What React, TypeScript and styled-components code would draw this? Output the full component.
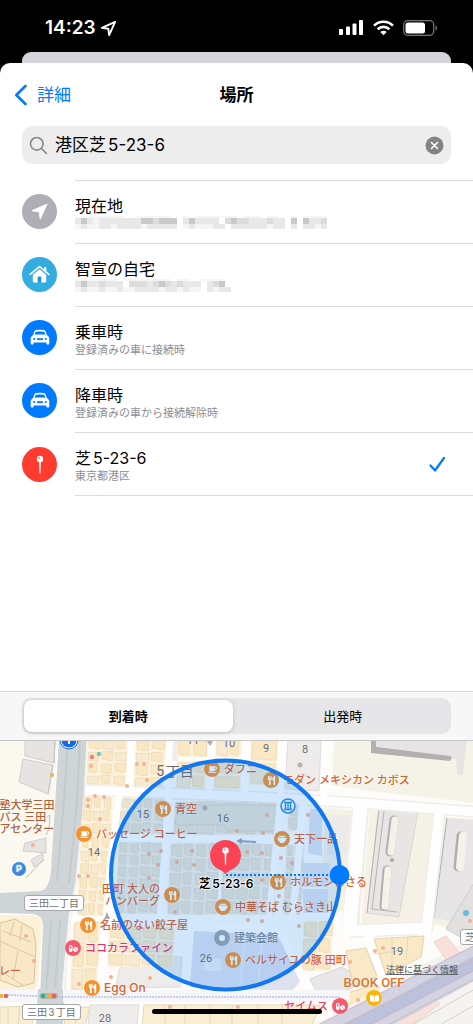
import React, { useState } from "react";
import styled, { createGlobalStyle, css } from "styled-components";
import { FaUtensils, FaCoffee, FaBookOpen, FaPills } from "react-icons/fa";

const blue = "#007aff";

const GlobalStyle = createGlobalStyle`
  * { box-sizing: border-box; }
  body {
    margin: 0;
    background: #000;
    font-family: Inter, "Noto Sans CJK JP", sans-serif;
    color: #000;
    text-autospace: normal;
  }
  button, input { font: inherit; color: inherit; text-autospace: inherit; }
  button { border: 0; padding: 0; background: none; cursor: pointer; }
  svg { display: block; flex: none; }
`;

const Screen = styled.div`
  min-height: 100vh;
  display: flex;
  flex-direction: column;
  position: relative;
  background: #000;
`;

const StatusBar = styled.header`
  height: 52px;
  padding: 4px 35px 0 45px;
  display: flex;
  align-items: center;
  justify-content: space-between;
  color: #fff;
`;

const StatusGroup = styled.div<{ $gap: number }>`
  display: flex;
  align-items: center;
  gap: ${(p) => p.$gap}px;
`;

const Clock = styled.time`
  font-size: 19px;
  line-height: 24px;
  font-weight: 600;
`;

const SheetBehind = styled.div`
  height: 11px;
  margin: 0 22px;
  border-radius: 9px 9px 0 0;
  background: #d5d4da;
`;

const Sheet = styled.main`
  flex: 1;
  display: flex;
  flex-direction: column;
  background: #fff;
  border-radius: 10px 10px 0 0;
  overflow: hidden;
`;

const NavBar = styled.nav`
  height: 63px;
  padding: 0 14px;
  display: grid;
  grid-template-columns: 1fr auto 1fr;
  align-items: center;
`;

const BackButton = styled.button`
  display: flex;
  align-items: center;
  gap: 9px;
  justify-self: start;
  color: ${blue};
  font-size: 17px;
  line-height: 24px;
`;

const Title = styled.h1`
  margin: 0;
  font-size: 17px;
  line-height: 24px;
  font-weight: 700;
`;

const SearchField = styled.label`
  height: 38px;
  margin: 0 22px;
  padding: 0 7px;
  display: flex;
  align-items: center;
  gap: 7px;
  border-radius: 10px;
  background: #ededed;
`;

const SearchInput = styled.input`
  flex: 1;
  min-width: 0;
  padding: 0;
  border: 0;
  outline: 0;
  background: none;
  font-size: 17px;
  line-height: 24px;
`;

const PlaceList = styled.ul`
  list-style: none;
  margin: 16px 0 0;
  padding: 0;
  flex: 1;
`;

const PlaceRow = styled.button`
  width: 100%;
  padding-left: 22px;
  display: flex;
  align-items: center;
  gap: 18px;
  text-align: left;
`;

const RowIcon = styled.span<{ $color: string }>`
  width: 35px;
  height: 35px;
  border-radius: 50%;
  flex: none;
  display: grid;
  place-items: center;
  background: ${(p) => p.$color};
`;

const RowBody = styled.span<{ $last: boolean }>`
  flex: 1;
  height: ${(p) => (p.$last ? 64 : 63)}px;
  padding-right: 27px;
  display: flex;
  align-items: center;
  justify-content: space-between;
  border-top: 1px solid #dcdcde;
  ${(p) => p.$last && css`border-bottom: 1px solid #dcdcde;`}
`;

const RowText = styled.span`
  padding-top: 3px;
  display: flex;
  flex-direction: column;
`;

const RowTitle = styled.span`
  font-size: 16px;
  line-height: 20px;
`;

const RowDetail = styled.span`
  height: 16px;
  font-size: 11px;
  line-height: 16px;
  color: #8e8e93;
`;

const SegmentBar = styled.div`
  padding: 6px 22px;
  border-top: 1px solid #d8d8da;
  border-bottom: 1px solid #c6c6c8;
  background: #f7f7f7;
`;

const Segments = styled.div`
  height: 36px;
  padding: 2px;
  display: grid;
  grid-template-columns: 1fr 1fr;
  border-radius: 9px;
  background: #e6e6e8;
`;

const Segment = styled.button<{ $active: boolean }>`
  border-radius: 8px;
  font-size: 13px;
  line-height: 20px;
  ${(p) =>
    p.$active &&
    css`
      background: #fff;
      font-weight: 700;
      margin-right: 4px;
      box-shadow: 0 1px 4px rgba(0, 0, 0, 0.18);
    `}
`;

const MapArea = styled.section`
  height: 283px;
  display: flex;
  justify-content: center;
  overflow: hidden;
  background: #f7f4ea;
`;

const MapCanvas = styled.div`
  position: relative;
  flex: 0 0 473px;
  height: 100%;
`;

const MapLayer = styled.svg`
  position: absolute;
  inset: 0;
`;

const Poi = styled.div<{ $x: number; $y: number; $color: string; $before?: boolean; $size?: number }>`
  position: absolute;
  top: ${(p) => p.$y}px;
  ${(p) => (p.$before ? css`right: ${473 - p.$x - 8}px;` : css`left: ${p.$x - 8}px;`)}
  transform: translateY(-50%);
  display: flex;
  flex-direction: ${(p) => (p.$before ? "row-reverse" : "row")};
  align-items: center;
  gap: 4px;
  color: ${(p) => p.$color};
  font-size: ${(p) => p.$size ?? 11}px;
  line-height: 12px;
  font-weight: 500;
  text-align: ${(p) => (p.$before ? "right" : "left")};
  white-space: pre;
  text-shadow: 0 0 2px #fff, 0 0 1px #fff;
`;

const PoiBadge = styled.span<{ $color: string }>`
  width: 16px;
  height: 16px;
  flex: none;
  border-radius: 50%;
  display: grid;
  place-items: center;
  background: ${(p) => p.$color};
  color: #fff;
  box-shadow: 0 0 1px #fff;
`;

const MapText = styled.span<{ $x: number; $y: number; $size?: number; $color?: string; $weight?: number }>`
  position: absolute;
  left: ${(p) => p.$x}px;
  top: ${(p) => p.$y}px;
  transform: translate(-50%, -50%);
  white-space: pre;
  font-family: Roboto, "Noto Sans CJK JP", sans-serif;
  font-size: ${(p) => p.$size ?? 11}px;
  line-height: 12px;
  font-weight: ${(p) => p.$weight ?? 400};
  color: ${(p) => p.$color ?? "#66696d"};
  text-shadow: 0 0 2px rgba(255, 255, 255, 0.8);
`;

const StreetSign = styled.span<{ $x: number; $y: number }>`
  position: absolute;
  left: ${(p) => p.$x}px;
  top: ${(p) => p.$y}px;
  padding: 0 4px;
  border: 1px solid #a3a7aa;
  border-radius: 3px;
  background: #fff;
  font-size: 10px;
  line-height: 14px;
  color: #6f7377;
  white-space: nowrap;
`;

const SelectedLabel = styled.span`
  position: absolute;
  left: 226px;
  top: 143px;
  transform: translate(-50%, -50%);
  font-size: 12px;
  line-height: 16px;
  font-weight: 600;
  white-space: nowrap;
  text-shadow: 0 0 2px #fff, 0 0 2px #fff, 0 0 2px #fff, 1px 0 1px #fff, -1px 0 1px #fff;
`;

const LegalLink = styled.a`
  position: absolute;
  right: 15px;
  top: 222px;
  font-size: 9px;
  line-height: 14px;
  font-weight: 500;
  color: #66686b;
  text-decoration: underline;
`;

const HomeIndicator = styled.div`
  position: absolute;
  left: 50%;
  bottom: 10px;
  width: 170px;
  height: 5px;
  margin-left: -85px;
  border-radius: 3px;
  background: #000;
`;

const Arrow = ({ size, filled }: { size: number; filled?: boolean }) => (
  <svg width={size} height={size} viewBox="0 0 18 18" fill={filled ? "#fff" : "none"} stroke="#fff" strokeWidth={filled ? 1 : 2} strokeLinejoin="round">
    <path d="M16 2 L2 8.3 L8.8 9.2 L9.7 16 Z" />
  </svg>
);

const HomeIcon = () => (
  <svg width="21" height="19" viewBox="0 0 21 19" fill="none">
    <path d="M1.2 9.4 L10.5 1.6 L19.8 9.4" stroke="#fff" strokeWidth="1.6" strokeLinecap="round" strokeLinejoin="round" />
    <path d="M15 2h2.3v5L15 5z" fill="#fff" />
    <path fillRule="evenodd" d="M3.8 9.8 L10.5 4.2 L17.2 9.8V16.4a1 1 0 0 1-1 1H4.8a1 1 0 0 1-1-1Z M8.6 11.4v6h3.800V11.400Z" fill="#fff" />
    <path d="M9.200 12h2.600v4.400H9.200z" fill="#2c8fc2" />
  </svg>
);

const CarIcon = () => (
  <svg width="20" height="17" viewBox="0 0 20 17">
    <path
      fill="#fff"
      fillRule="evenodd"
      d="M5.4 1.2 C7 .5 13 .5 14.6 1.2 C15.7 1.8 16.2 3.7 16.8 6 C18.6 7.2 19.3 8 19.3 9.6 V14.6 C19.3 16 16.4 16 16.4 14.6 V13.6 H3.6 V14.6 C3.6 16 .7 16 .7 14.6 V9.6 C.7 8 1.4 7.2 3.2 6 C3.8 3.7 4.3 1.8 5.4 1.2Z M5.8 2.8 C5.3 3.4 5 4.6 4.8 5.8 C8 5.3 12 5.3 15.2 5.8 C15 4.6 14.7 3.4 14.2 2.8 C12.5 2.3 7.5 2.3 5.8 2.8Z M4.2 8.9a1.1 1.1 0 1 0 0 2.2a1.1 1.1 0 0 0 0-2.2Z M15.8 8.9a1.1 1.1 0 1 0 0 2.2a1.1 1.1 0 0 0 0-2.2Z M7.6 9.2a.8.8 0 0 0 0 1.7h4.8a.8.8 0 0 0 0-1.7Z"
    />
  </svg>
);

const PinShape = ({ color }: { color: string }) => (
  <>
    <path d="M-0.9 -2 H0.9 L0.5 9.5 H-0.5Z" fill="#fff" />
    <circle cy="-5" r="3.2" fill="#fff" />
    <circle cx="-1" cy="-6" r="1.1" fill={color} />
  </>
);

const PinIcon = () => (
  <svg width="12" height="22" viewBox="-6 -11 12 22">
    <PinShape color="#ff8a80" />
  </svg>
);

/* Grey levels of the obscured address line, one digit per 6px cell. */
const redactions = {
  long: ["0111111100111111001011111110111011001011110", "2421222222244344402422220343322232204042232430", "1211221222212222201211122022222212203022121220"],
  short: ["11111110111111110110011110", "24223222033323432322202340", "12112112112222122121102122"],
};
const greys = ["#fff", "#f5f5f5", "#e8e8e9", "#dcdcdd", "#c9c9ca"];

const Redacted = ({ rows }: { rows: string[] }) => (
  <svg width="254" height="16" role="img" aria-label="住所">
    {rows.map((row, y) =>
      [...row].slice(0, 42).map((level, x) => (
        <rect
          key={`${x}-${y}`}
          x={x * 6}
          y={[-2, 2, 8][y]}
          width="6"
          height={[4, 6, 5][y]}
          fill={greys[y === 2 ? Math.min(Number(level), 2) : Number(level)]}
        />
      ))
    )}
  </svg>
);

const places = [
  { title: "現在地", detail: <Redacted rows={redactions.long} />, color: "#aeaeb4", icon: <Arrow size={19} filled /> },
  { title: "智宣の自宅", detail: <Redacted rows={redactions.short} />, color: "#32ace1", icon: <HomeIcon /> },
  { title: "乗車時", detail: "登録済みの車に接続時", color: blue, icon: <CarIcon /> },
  { title: "降車時", detail: "登録済みの車から接続解除時", color: blue, icon: <CarIcon /> },
  { title: "芝5-23-6", detail: "東京都港区", color: "#ff3b30", icon: <PinIcon /> },
];

const Bowl = () => (
  <svg width="10" height="10" viewBox="0 0 10 10">
    <path d="M.5 3.5h9C9.500 6 8.500 7.500 7 8.300V9H3V8.300C1.500 7.500.5 6 .5 3.500Z" fill="#fff" />
    <path d="M2 2.300h6" stroke="#fff" strokeWidth="1.200" />
  </svg>
);

const brown = "#d65f2c";
const orange = "#f5922e";
const pink = "#f25a6e";
const fork = <FaUtensils size={9} />;
const cup = <FaCoffee size={9} />;

const pois = [
  { x: 212, y: 28, text: "ダフニ", icon: cup },
  { x: 271, y: 39, text: "モダン メキシカン カボス", icon: fork },
  { x: 163, y: 68, text: "青空", icon: fork },
  { x: 84, y: 93, text: "パッセージ コーヒー", icon: cup },
  { x: 282, y: 98, text: "天下一品", icon: <Bowl /> },
  { x: 172, y: 154, text: "田町 大人の\nハンバーグ", icon: fork, before: true },
  { x: 278, y: 141, text: "ホルモンまさる", icon: fork },
  { x: 223, y: 166, text: "中華そば むらさき山", icon: <Bowl /> },
  { x: 88, y: 184, text: "名前のない餃子屋", icon: fork },
  { x: 73, y: 207, text: "ココカラファイン", icon: <FaPills size={9} />, badge: pink, color: "#d8356c" },
  { x: 222, y: 197, text: "建築会館", icon: <svg width="6" height="6"><circle cx="3" cy="3" r="3" fill="#fff" /></svg>, badge: "#9fa3a9", color: "#80858c" },
  { x: 233, y: 219, text: "ベルサイユの豚 田町", icon: fork },
  { x: 92, y: 247, text: "Egg On", icon: fork, size: 12 },
  { x: 340, y: 265, text: "セイムス", icon: <FaPills size={9} />, badge: pink, color: "#e0415c", before: true },
  { x: 374, y: 257, text: "", icon: <FaBookOpen size={9} />, badge: "#f9b50c" },
];

const numbers: [string, number, number][] = [
  ["11", 193, 0], ["10", 229, 3], ["9", 266, 8], ["8", 305, 9], ["15", 143, 74], ["16", 223, 78],
  ["14", 94, 112], ["26", 206, 218], ["19", 397, 211], ["28", 105, 278],
];

/* x, y, width, height of each block, then its columns and rows of buildings. */
const blocks: [number, number, number, number, number, number][] = [
  [88, -2, 40, 47, 3, 4], [136, -2, 30, 50, 2, 4], [177, -2, 32, 18, 2, 1], [216, -2, 26, 18, 2, 1],
  [251, -2, 27, 46, 1, 2], [178, 20, 30, 28, 2, 2], [216, 20, 27, 28, 1, 2],
  [86, 55, 30, 120, 3, 9], [123, 57, 46, 36, 4, 3], [178, 60, 104, 34, 5, 2],
  [124, 101, 44, 72, 4, 6], [176, 102, 50, 72, 4, 5], [229, 102, 54, 72, 4, 5],
  [292, 62, 10, 28, 1, 2], [292, 102, 18, 72, 2, 5], [83, 180, 27, 70, 2, 3], [119, 186, 66, 40, 4, 3],
  [313, 180, 30, 50, 2, 3],
];

/* Blocks in the middle of the district are drawn in a cooler, greyer tone. */
const isMuted = ([x, y]: number[]) => y > 50 && x > 120 && x < 312;

const Block = ({ b, i }: { b: (typeof blocks)[number]; i: number }) => {
  const [x, y, w, h, cols, rows] = b;
  const cw = w / cols;
  const ch = h / rows;
  const muted = isMuted(b);
  return (
    <g>
      <rect x={x} y={y} width={w} height={h} rx="3" fill={muted ? "#f3eee0" : "#fcf2dc"} />
      {Array.from({ length: cols * rows }, (_, n) => {
        const c = n % cols;
        const r = Math.floor(n / cols);
        const k = (n * 7 + i * 5) % 4;
        return (
          <path
            key={n}
            d={`M${x + c * cw + 1} ${y + r * ch + 1 + (k % 2)}h${cw - 2 - (k % 3)}v${ch - 3}h${-(cw - 3) / 2}v-1h${-(cw - 3) / 2 + (k % 3)}z`}
            fill={muted ? "#ebe4d3" : k === 3 ? "#f7ead0" : "#fae7c3"}
            stroke={muted ? "#dcd6c6" : "#ead9b4"}
            strokeWidth=".7"
          />
        );
      })}
    </g>
  );
};

const dots: [number, number][] = [
  [91, 25], [127, 45], [137, 23], [144, 23], [147, 39], [88, 59], [95, 55], [104, 56], [88, 65], [100, 78],
  [79, 135], [88, 135], [149, 113], [161, 110], [177, 121], [194, 124], [158, 124], [149, 137], [192, 110],
  [267, 74], [263, 92], [237, 90], [308, 74], [247, 111], [262, 112], [281, 117], [292, 122], [262, 139],
  [279, 155], [248, 179], [262, 180], [299, 185], [175, 171], [111, 236], [150, 237], [79, 243], [26, 195],
  [34, 220], [33, 104], [350, 221], [375, 210], [383, 207], [358, 259], [170, 266], [238, 266], [470, 180],
];

const MapBase = () => (
  <MapLayer width="473" height="283" viewBox="0 0 473 283" aria-hidden="true">
    <rect width="473" height="283" fill="#fdfcf9" />
    {/* campus and western blocks */}
    <path d="M0 0H57L52 122Q50 151 40 151L0 152Z" fill="#fbf8f0" />
    <path d="M25-2H55L54 22L25 15Z M23 18L53 24L48 53L19 41Z M25 102L46 97V112L23 110Z M31 119L43 112V120L34 126Z" fill="#e6e4e3" stroke="#d0cfcd" />
    <path d="M55-2L54 22M53 24L48 53M47 76l3-2-1 14-3 6M44 118L26 137" fill="none" stroke="#c4c2bf" />
    {/* main avenue */}
    <path d="M59-2H88L85 60L77 140L70 175L63 283H39L43 185Q43 174 32 173L0 172V152L40 150Q49 149 51 130Z" fill="#cfd5d6" />
    <path d="M68-2L64 60L57 140M80-2L77 60L69 142M51 180L46 252M60 180L55 252" fill="none" stroke="#c2cacc" strokeWidth="2" />
    <path d="M88-2L85 60L77 140L70 175L63 252" fill="none" stroke="#f5f6f3" strokeWidth="3" />
    <path d="M0 174H32Q43 175 42 188L38 240Q37 251 28 251H0Z" fill="#fcf2da" />
    <path d="M0 182L15 178L33 188L36 203L34 242L18 246L0 239Z" fill="#f8e8c6" stroke="#d6c59d" />
    <path d="M0 200L35 216M3 190L31 201M0 230L24 245M14 181L10 195M22 184L20 200M18 210L13 238" fill="none" stroke="#d9c8a1" />
    {/* northern and eastern grounds */}
    <path d="M288-2H321L319 50L285 48Z M130 214L182 216L180 246L116 247L119 229Z M90 264H139L137 285H88Z" fill="#edecea" stroke="#dfdddb" />
    <path d="M170-2L168 20H178L180-2Z" fill="#efeded" />
    <path d="M334-2H475V62L440 58L370 50L332 44Z" fill="#f5f2e7" />
    <path d="M371-2V12L450 20L464-2Z" fill="#b2b1b0" />
    <path d="M376-2V6L450 15L456 19L458 34H463L467-2Z" fill="#e6e4e4" />
    <path d="M325 66L355 70L348 165L338 172L322 170Z M370 66L435 72L424 182L361 184Z M443 76L475 78V192L431 183Z" fill="#f5f2e5" />
    <path d="M379 67L418 71L399 176L367 172Z" fill="#e8e6e5" stroke="#d9d7d4" />
    <path d="M379 67L367 172M384 70L372 168L397 171" fill="none" stroke="#b5b4b2" />
    <path d="M394 79L390 111M387 129L384 165" stroke="#b0afac" strokeWidth="9" strokeLinecap="round" />
    <path d="M395 79L391 111M388 129L385 165" stroke="#f5f2e9" strokeWidth="7" strokeLinecap="round" />
    <circle cx="392" cy="119" r="2" fill="#a9a8a6" />
    <path d="M447 77L475 79V138L451 180L434 177Z" fill="#e7e5e5" />
    <path d="M447 77L434 177" stroke="#b0afad" />
    <path d="M461 95L458 126" stroke="#b0afac" strokeWidth="9" strokeLinecap="round" />
    <path d="M463 95L460 126" stroke="#f5f2e9" strokeWidth="8" strokeLinecap="round" />
    <path d="M475 140L446 188L475 204Z" fill="#e2dfdf" stroke="#cfcccc" />
    <path d="M310 68H322V115L308 112Z M300 122L330 122L328 146H298Z M302 148H328V172H304Z" fill="#dfe2ee" />
    <path d="M330 74h20l-3 40h-20z" fill="#ecebe9" />
    {/* blocks of small buildings */}
    <g transform="skewX(-3)">
      {blocks.map((b, i) => <Block key={i} b={b} i={i} />)}
    </g>
    <path d="M194 190L286 194L304 236L292 250L190 246Z" fill="#dde0ef" />
    <path d="M204 218H221V230H204Z" fill="#ebecf3" />
    <path d="M245 192L240 248M262 193L258 248" stroke="#e7e9f4" strokeWidth="2" />
    <path d="M178 64h103l-2 26h-52l-2-6h-50z" fill="#e9e3d4" stroke="#dad3c2" />
    {/* streets */}
    <g fill="none" stroke="#efede8" strokeLinejoin="round">
      <path d="M350 190L361 64" strokeWidth="17" />
      <path d="M426 192L440 66" strokeWidth="13" />
      <path d="M88 49L260 56L360 62L475 71" strokeWidth="12" />
      <path d="M350 190L430 187" strokeWidth="14" />
    </g>
    <g fill="none" stroke="#fefefe" strokeLinejoin="round">
      <path d="M86 49L260 56L360 62L475 71" strokeWidth="9" />
      <path d="M118 96L200 97L300 102M72 177L160 181L270 187" strokeWidth="5" />
      <path d="M131-2L130 48M120 52L110 120L100 250M170-2L168 60L159 186M211-2L209 52M247-2L244 55M284-2L280 60L268 186" strokeWidth="6" />
      <path d="M304 62L292 180M326-2L324 56" strokeWidth="7" />
      <path d="M361 60L349 190" strokeWidth="14" />
      <path d="M440 66L426 192L380 245" strokeWidth="10" />
      <path d="M350 190L430 187M368 194L386 245" strokeWidth="11" />
      <path d="M270 187L282 194L312 256" strokeWidth="8" />
    </g>
    <path d="M310 238L342 226L367 240L340 252L318 254Z" fill="#e8e6e8" stroke="#d9d5d4" />
    <path d="M346 210L366 207L377 235L363 245L352 240Z M374 198L424 195L421 216L386 234Z M335 256L376 243L384 252L352 268Z" fill="#fae9c6" stroke="#e2d2af" />
    <path d="M392 196V224M408 196L406 219M375 213L398 210" stroke="#e6d7b6" />
    {/* subway line */}
    <path d="M0 255H350" stroke="#f7f7fa" strokeWidth="12" />
    <path d="M38 248H63V284H36Z" fill="#cfd5d6" />
    <path d="M8 254L60 256L340 256" fill="none" stroke="#b3c0f4" strokeWidth="1.500" strokeDasharray="2 1" />
    <path d="M0 266L34 265L32 285H0Z M66 267L90 266L85 285H64Z M144 264L320 264L312 285H142Z" fill="#f9eed3" stroke="#e4d8bb" />
    <path d="M8 266V284M20 266L18 284M78 268L75 284M165 265V284M185 265V284M210 265V284M232 265V284M258 265V284M282 265V284" stroke="#e2d5b4" />
    {/* railway */}
    <path d="M312 285L475 195V285Z" fill="#f5f3f0" />
    <path d="M434 201L446 195L463 216L450 224Z M389 277L430 255L440 263L410 285H391Z" fill="#f8e1db" stroke="#efd0ca" />
    <path d="M306 290L480 201L480 237L382 290Z" fill="#d3d3e1" />
    <path d="M330 290L480 212L480 227L360 290Z" fill="#bcc1dc" />
    <path d="M316 285L480 202M342 285L480 216M366 285L480 226M382 287L480 235" stroke="#cdb6c6" strokeWidth="1" />
    <path d="M410 285L475 248M438 285L475 264" stroke="#d4d1cd" />
    <g>
      {dots.map(([x, y]) => <circle key={`${x}-${y}`} cx={x} cy={y} r="2" fill="#f3b391" />)}
      <circle cx="92" cy="16" r="2.200" fill="#f07b8d" />
      <circle cx="99" cy="13" r="2.200" fill="#72c5bf" />
      <circle cx="52" cy="34" r="2" fill="#e3b45d" />
      <circle cx="205" cy="67" r="2.500" fill="#b7b1ac" />
      <circle cx="300" cy="24" r="2.500" fill="#b4b3b1" />
      <circle cx="466" cy="172" r="3" fill="#66b9e1" />
    </g>
    {/* one-way arrows */}
    <path d="M107 171l-3 7h6zM210 5l-3-5h6z" fill="#aaa8a8" />
    <path d="M256 101l-18-1" stroke="#9aa3b2" strokeWidth="2" />
    <path d="M236 100l6-3v6z" fill="#9aa3b2" />
    {/* traffic lights */}
    <rect x="40" y="252" width="18" height="6" rx="3" fill="#aeb5b6" />
    <circle cx="43" cy="255" r="2.300" fill="#27b38c" />
    <circle cx="49" cy="255" r="2.300" fill="#f0b136" />
    <circle cx="54" cy="255" r="2.300" fill="#ef5960" />
    <circle cx="1" cy="255" r="2.300" fill="#f0b136" />
    <circle cx="6" cy="255" r="2.300" fill="#ef5960" />
  </MapLayer>
);

const MapMarks = () => (
  <MapLayer width="473" height="283" viewBox="0 0 473 283" aria-hidden="true">
    <circle cx="69" cy="-1" r="8" fill="#1268ef" stroke="#fff" strokeWidth="1" />
    <circle cx="69" cy="-1" r="9" fill="none" stroke="#1268ef" />
    <path d="M69-2v5" stroke="#fff" strokeWidth="2" />
    <circle cx="19" cy="128" r="7" fill="#3b86dd" />
    <circle cx="288" cy="65" r="7" fill="#f3faff" stroke="#2b8be8" strokeWidth="1.500" />
    <path d="M284 61.500h8M284 68.500h8M285.500 62v6M288 62v6M290.500 62v6" stroke="#2b8be8" strokeWidth="1.300" />
  </MapLayer>
);

const Geofence = () => (
  <MapLayer width="473" height="283" viewBox="0 0 473 283" aria-hidden="true">
    <circle cx="225.500" cy="134" r="114.500" fill={blue} fillOpacity=".17" stroke="#1278f2" strokeWidth="4" />
    <path d="M226 134H330" stroke={blue} strokeWidth="2" strokeDasharray="2 2" />
    <circle cx="339.500" cy="134" r="10" fill={blue} />
    <path d="M225.500 133.500C223 129.500 219 129 215.500 126.300A15.500 15.500 0 1 1 235.500 126.300C232 129 228 129.500 225.500 133.500Z" fill="#fc4355" />
    <g transform="translate(225.500 114.500)"><PinShape color="#f58b94" /></g>
  </MapLayer>
);

export default function App() {
  const [query, setQuery] = useState("港区芝5-23-6");
  const [selected, setSelected] = useState(4);
  const [trigger, setTrigger] = useState(0);

  return (
    <Screen>
      <GlobalStyle />
      <StatusBar>
        <StatusGroup $gap={4}>
          <Clock>14:23</Clock>
          <Arrow size={17} />
        </StatusGroup>
        <StatusGroup $gap={9}>
          <svg width="25" height="16" viewBox="0 0 25 16" fill="#fff">
            <rect x="0" y="9" width="4" height="6" rx="1" />
            <rect x="7" y="6.500" width="4" height="8.500" rx="1" />
            <rect x="13.500" y="3.500" width="4" height="11.500" rx="1" />
            <rect x="20" y="0" width="4" height="15" rx="1" />
          </svg>
          <svg width="21" height="16" viewBox="0 0 21 16" fill="none" stroke="#fff" strokeWidth="2.600">
            <path d="M1 5.600a13.600 13.600 0 0 1 19 0" />
            <path d="M4.600 9.300a8.500 8.500 0 0 1 11.800 0" />
            <path d="M10.500 15.300L7.300 12a4.600 4.600 0 0 1 6.400 0Z" fill="#fff" stroke="none" />
          </svg>
          <svg width="35" height="16" viewBox="0 0 35 16">
            <rect x=".7" y=".7" width="30" height="14.600" rx="4" fill="none" stroke="#77777a" strokeWidth="1.200" />
            <rect x="2.500" y="2.500" width="19.500" height="11" rx="2.500" fill="#fff" />
            <path d="M32.500 5.500c2 .5 2 4.500 0 5z" fill="#77777a" />
          </svg>
        </StatusGroup>
      </StatusBar>
      <SheetBehind />
      <Sheet>
        <NavBar>
          <BackButton type="button">
            <svg width="14" height="22" viewBox="0 0 14 22" fill="none" stroke={blue} strokeWidth="2.600" strokeLinecap="round" strokeLinejoin="round">
              <path d="M11.500 2L2.300 11L11.500 20" />
            </svg>
            詳細
          </BackButton>
          <Title>場所</Title>
        </NavBar>
        <SearchField>
          <svg width="19" height="19" viewBox="0 0 19 19" fill="none" stroke="#85858a" strokeWidth="1.600" strokeLinecap="round">
            <circle cx="7.800" cy="7.800" r="6.300" />
            <path d="M12.500 12.500L17.500 17.500" />
          </svg>
          <SearchInput aria-label="検索" value={query} onChange={(e) => setQuery(e.target.value)} />
          <button type="button" aria-label="消去" onClick={() => setQuery("")}>
            <svg width="19" height="19" viewBox="0 0 19 19">
              <circle cx="9.500" cy="9.500" r="9" fill="#848488" />
              <path d="M6.500 6.500l6 6M12.500 6.500l-6 6" stroke="#fff" strokeWidth="1.600" strokeLinecap="round" />
            </svg>
          </button>
        </SearchField>
        <PlaceList>
          {places.map((place, i) => (
            <li key={place.title}>
              <PlaceRow type="button" onClick={() => setSelected(i)}>
                <RowIcon $color={place.color}>{place.icon}</RowIcon>
                <RowBody $last={i === places.length - 1}>
                  <RowText>
                    <RowTitle>{place.title}</RowTitle>
                    <RowDetail>{place.detail}</RowDetail>
                  </RowText>
                  {selected === i && (
                    <svg width="17" height="17" viewBox="0 0 17 17" fill="none" stroke={blue} strokeWidth="2.200" strokeLinecap="round" strokeLinejoin="round">
                      <path d="M1.500 9.500L6 14.500L15 2" />
                    </svg>
                  )}
                </RowBody>
              </PlaceRow>
            </li>
          ))}
        </PlaceList>
        <SegmentBar>
          <Segments>
            {["到着時", "出発時"].map((label, i) => (
              <Segment key={label} type="button" $active={trigger === i} aria-pressed={trigger === i} onClick={() => setTrigger(i)}>
                {label}
              </Segment>
            ))}
          </Segments>
        </SegmentBar>
        <MapArea>
          <MapCanvas>
            <MapBase />
            <MapMarks />
            {numbers.map(([n, x, y]) => <MapText key={n} $x={x} $y={y}>{n}</MapText>)}
            <MapText $x={175} $y={30} $size={14}>5丁目</MapText>
            <MapText $x={19} $y={128} $size={9} $color="#fff" $weight={700}>P</MapText>
            <MapText $x={27} $y={77} $color="#b0623f" $weight={500}>{"塾大学三田\nパス 三田\nアセンター"}</MapText>
            <MapText $x={10} $y={231} $color={brown} $weight={500}>レー</MapText>
            <MapText $x={374} $y={242} $size={13} $color="#d9742d" $weight={500}>BOOK OFF</MapText>
            <StreetSign $x={24} $y={154}>三田二丁目</StreetSign>
            <StreetSign $x={22} $y={263}>三田3丁目</StreetSign>
            <StreetSign $x={460} $y={188}>芝</StreetSign>
            {pois.map((p) => (
              <Poi key={`${p.x}-${p.y}`} $x={p.x} $y={p.y} $color={p.color ?? brown} $before={p.before} $size={p.size}>
                <PoiBadge $color={p.badge ?? orange}>{p.icon}</PoiBadge>
                {p.text}
              </Poi>
            ))}
            <Geofence />
            <SelectedLabel>芝5-23-6</SelectedLabel>
            <LegalLink href="#legal">法律に基づく情報</LegalLink>
          </MapCanvas>
        </MapArea>
      </Sheet>
      <HomeIndicator />
    </Screen>
  );
}
